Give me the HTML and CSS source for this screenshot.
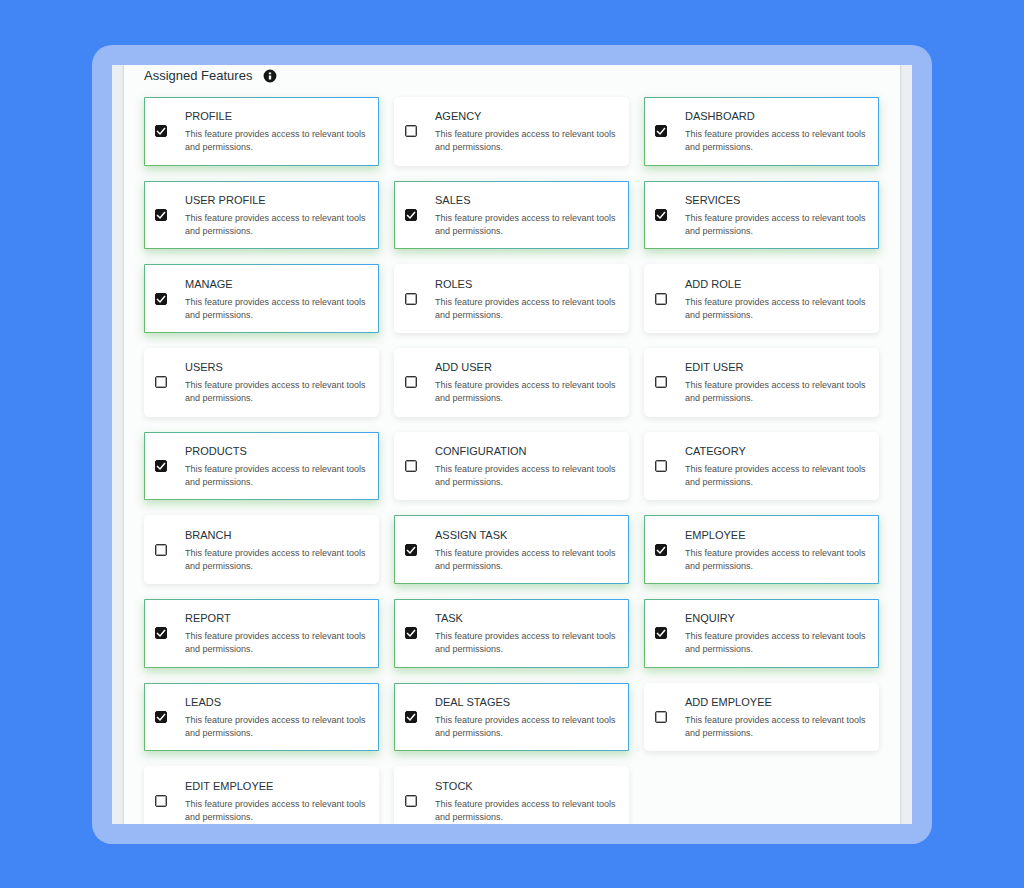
FILE: index.html
```html
<!DOCTYPE html>
<html lang="en">
<head>
    <meta charset="UTF-8">
    <meta name="viewport" content="width=device-width, initial-scale=1.0">
    <title>Assigned Features</title>
    <link rel="stylesheet" href="styles.css">
</head>
<body>
    <div class="frame">
        <div class="screen">
            <main class="panel">
                <div class="heading">
                    <h1>Assigned Features</h1>
                    <svg class="info" viewBox="0 0 24 24" role="img" aria-label="Info">
                        <path d="M12 1a11 11 0 1 0 0 22 11 11 0 0 0 0-22zm2 17h-4v-7h4zm0-9h-4v-3h4z"/>
                    </svg>
                </div>
                <div class="features" id="features"></div>
            </main>
        </div>
    </div>
    <script src="script.js"></script>
</body>
</html>
```
FILE: styles.css
```css
* {
    box-sizing: border-box;
}
body {
    margin: 0;
    height: 100vh;
    padding: 45px 92px 44px;
    background: #4285f4;
    font-family: "Liberation Sans", Arial, sans-serif;
    color: #263238;
}
.frame {
    height: 100%;
    padding: 20px;
    border-radius: 20px;
    background: #98b9f5;
}
.screen {
    height: 100%;
    padding: 0 12px;
    overflow: hidden;
    background: #eceff2;
}
.panel {
    min-height: 100%;
    padding: 0 21px 20px 20px;
    background: #fbfcfc;
    box-shadow: 0 0 2px 1px #d3d6d9;
}
.heading {
    display: flex;
    align-items: center;
    gap: 11px;
    height: 32px;
    padding-bottom: 11px;
}
h1 {
    margin: 0;
    font-size: 13px;
    font-weight: normal;
}
.info {
    width: 14px;
    height: 14px;
    fill: #151515;
}
.features {
    display: grid;
    grid-template-columns: repeat(3, 1fr);
    grid-auto-rows: 1fr;
    gap: 15px;
    min-height: 738px;
}
.card {
    display: flex;
    align-items: center;
    gap: 18px;
    padding: 0 10px;
    border: 1px solid transparent;
    border-radius: 5px;
    background: white;
    box-shadow: 0 2px 6px rgba(0, 0, 0, 0.09);
    cursor: pointer;
}
.card:has(:checked) {
    background: linear-gradient(white, white) padding-box,
        linear-gradient(45deg, #66bb6a, #42a5f5) border-box;
    border-radius: 1px;
    box-shadow: 0 4px 10px rgba(76, 175, 80, 0.35);
}
.card input {
    appearance: none;
    flex: none;
    width: 12px;
    height: 12px;
    margin: 0;
    border: 1px solid #333;
    border-radius: 2px;
    box-shadow: inset 0 0 0 1px #aaa;
}
.card input:checked {
    border-color: #151515;
    box-shadow: none;
    background: #151515 url("data:image/svg+xml,%3Csvg xmlns='http://www.w3.org/2000/svg' viewBox='0 0 10 10'%3E%3Cpath d='M1 5l3 3 5-6' fill='none' stroke='white' stroke-width='1.500'/%3E%3C/svg%3E");
}
.name {
    display: block;
    padding-top: 1px;
    font-size: 11px;
    line-height: 14px;
    margin-bottom: 5px;
}
.about {
    display: block;
    font-size: 9px;
    line-height: 13px;
    color: #505050;
}
```
FILE: script.js
```javascript
const features = [
    ['PROFILE', true], ['AGENCY', false], ['DASHBOARD', true],
    ['USER PROFILE', true], ['SALES', true], ['SERVICES', true],
    ['MANAGE', true], ['ROLES', false], ['ADD ROLE', false],
    ['USERS', false], ['ADD USER', false], ['EDIT USER', false],
    ['PRODUCTS', true], ['CONFIGURATION', false], ['CATEGORY', false],
    ['BRANCH', false], ['ASSIGN TASK', true], ['EMPLOYEE', true],
    ['REPORT', true], ['TASK', true], ['ENQUIRY', true],
    ['LEADS', true], ['DEAL STAGES', true], ['ADD EMPLOYEE', false],
    ['EDIT EMPLOYEE', false], ['STOCK', false]
];

document.getElementById('features').innerHTML = features.map(([name, on], i) => `
    <label class="card" for="feature-${i}">
        <input type="checkbox" id="feature-${i}" ${on ? 'checked' : ''}>
        <span>
            <span class="name">${name}</span>
            <span class="about">This feature provides access to relevant tools and permissions.</span>
        </span>
    </label>`).join('');
```
